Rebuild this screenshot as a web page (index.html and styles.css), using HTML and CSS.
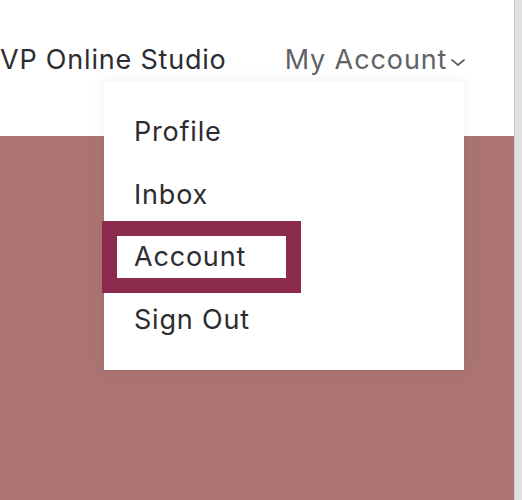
FILE: index.html
```html
<!DOCTYPE html>
<html lang="en">
<head>
<meta charset="utf-8">
<title>VP Online Studio</title>
<link rel="stylesheet" href="styles.css">
</head>
<body>
<div class="page">
  <div class="main">
    <header class="topbar">
      <span class="brand">VP Online Studio</span>
      <div class="account">
        <span class="account-label">My Account</span>
        <svg class="chev" width="16" height="9" viewBox="0 0 16 9"><path d="M2 2 L8 7 L14 2" fill="none" stroke="#5f6368" stroke-width="1.7" stroke-linecap="round" stroke-linejoin="round"/></svg>
      </div>
    </header>
    <section class="content"></section>
    <ul class="dropdown">
      <li class="item"><a class="link">Profile</a></li>
      <li class="item"><a class="link">Inbox</a></li>
      <li class="item"><a class="link active">Account</a></li>
      <li class="item"><a class="link">Sign Out</a></li>
    </ul>
  </div>
  <div class="gutter"></div>
</div>
</body>
</html>
```
FILE: styles.css
```css
html, body {
  margin: 0;
  padding: 0;
  height: 100%;
}
body {
  font-family: "Inter", "Noto Sans", sans-serif;
  color: #2b2d31;
  background: #ffffff;
}
.page {
  display: flex;
  height: 500px;
  overflow: hidden;
}
.main {
  flex: 1;
  position: relative;
  display: flex;
  flex-direction: column;
}
.gutter {
  width: 7px;
  background: #e0e0e0;
  border-left: 1px solid #cbcbcb;
}
.topbar {
  height: 136px;
  display: flex;
  align-items: flex-start;
  padding-top: 42px;
  box-sizing: border-box;
  background: #ffffff;
}
.brand {
  font-size: 27px;
  line-height: 36px;
  letter-spacing: 0.8px;
  color: #2b2d31;
  margin-left: 0;
}
.account {
  margin-left: 58px;
  display: flex;
  align-items: center;
  gap: 3px;
}
.account-label {
  font-size: 27px;
  line-height: 36px;
  letter-spacing: 0.9px;
  color: #5f6368;
}
.chev {
  margin-top: 5px;
}
.content {
  flex: 1;
  background: #ab7472;
}
.dropdown {
  position: absolute;
  left: 104px;
  top: 82px;
  width: 360px;
  height: 288px;
  box-sizing: border-box;
  margin: 0;
  padding: 19px 0;
  list-style: none;
  background: #ffffff;
  box-shadow: 0 0 14px rgba(0, 0, 0, 0.07);
}
.item {
  height: 62.5px;
  display: flex;
  align-items: center;
}
.link {
  display: block;
  flex: none;
  width: 199px;
  height: 72px;
  box-sizing: border-box;
  margin-left: -2px;
  padding: 0 18px 0 17px;
  border: 15px solid transparent;
  font-size: 27px;
  line-height: 42px;
  letter-spacing: 0.8px;
  color: #2b2d31;
}
.link.active {
  border-color: #8b2c4e;
}
```
